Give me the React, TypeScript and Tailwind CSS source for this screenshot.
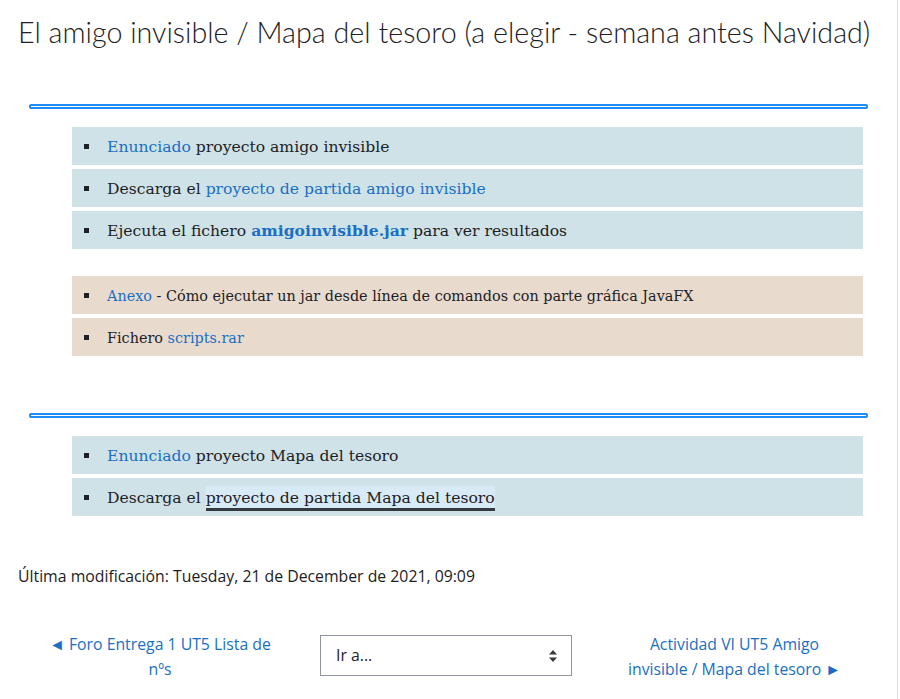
import React from "react";

const serif = { fontFamily: '"DejaVu Serif", Georgia, serif' };

function Hr() {
  return <div className="ml-[29px] mr-[29px] h-[5px] rounded-[2px] border-2 border-[#1e8cf5] bg-white" />;
}

function Item({ bg, size, children }: { bg: string; size?: string; children: React.ReactNode }) {
  return (
    <li className={`flex items-center h-[38px] ${bg}`}>
      <span className="ml-[12px] mr-[18px] w-[5px] h-[5px] bg-[#1d2125] shrink-0" />
      <span className={`${size ?? "text-[15.6px]"} pt-[3px] text-[#1d2125] whitespace-nowrap`}>{children}</span>
    </li>
  );
}

const A = ({ children }: { children: React.ReactNode }) => (
  <span className="text-[#1a6fc4]">{children}</span>
);

export default function App() {
  return (
    <div className="w-[900px] h-[699px] bg-white overflow-hidden" style={{ fontFamily: '"Open Sans", sans-serif' }}>
      <div className="w-[898px] h-[699px] border-r border-[#dee2e6]">
        <h1
          className="pt-[12px] pl-[18px] text-[28.7px] leading-[40px] font-light text-[#1d2125] whitespace-nowrap"
          style={{ fontFamily: 'Lato, sans-serif' }}
        >
          El amigo invisible / Mapa del tesoro (a elegir - semana antes Navidad)
        </h1>
        <div className="mt-[52px]">
          <Hr />
        </div>
        <ul className="mt-[18px] ml-[72px] mr-[34px] flex flex-col gap-[4px]" style={serif}>
          <Item bg="bg-[#cfe2e8]">
            <A>Enunciado</A> proyecto amigo invisible
          </Item>
          <Item bg="bg-[#cfe2e8]">
            Descarga el <A>proyecto de partida amigo invisible</A>
          </Item>
          <Item bg="bg-[#cfe2e8]">
            Ejecuta el fichero <span className="font-bold text-[#1a6fc4]">amigoinvisible.jar</span> para ver resultados
          </Item>
        </ul>
        <ul className="mt-[27px] ml-[72px] mr-[34px] flex flex-col gap-[4px]" style={serif}>
          <Item bg="bg-[#e8dbce]" size="text-[14.4px]">
            <A>Anexo</A> - Cómo ejecutar un jar desde línea de comandos con parte gráfica JavaFX
          </Item>
          <Item bg="bg-[#e8dbce]" size="text-[14.4px]">
            Fichero <A>scripts.rar</A>
          </Item>
        </ul>
        <div className="mt-[57px]">
          <Hr />
        </div>
        <ul className="mt-[18px] ml-[72px] mr-[34px] flex flex-col gap-[4px]" style={serif}>
          <Item bg="bg-[#cfe2e8]">
            <A>Enunciado</A> proyecto Mapa del tesoro
          </Item>
          <Item bg="bg-[#cfe2e8]">
            Descarga el{" "}
            <span className="bg-[#d9eaf7] border-b-[3px] border-[#343a40] pt-[3px] pb-[1px]">proyecto de partida Mapa del tesoro</span>
          </Item>
        </ul>
        <p className="mt-[49px] pl-[18px] text-[15.8px] leading-[22px] text-[#1d2125]">
          Última modificación: Tuesday, 21 de December de 2021, 09:09
        </p>
        <div className="mt-[45px] flex items-start">
          <div className="w-[320px] flex justify-center">
            <p className="w-[232px] text-center text-[15.8px] leading-[25px] text-[#1a6fc4]">
              ◄ Foro Entrega 1 UT5 Lista de nºs
            </p>
          </div>
          <div className="mt-[3px] w-[252px] h-[41px] border border-[#8f959e] flex items-center justify-between pl-[15px] pr-[13px] text-[15.8px] text-[#1d2125]">
            <span>Ir a...</span>
            <svg width="10" height="14" viewBox="0 0 10 14">
              <path d="M5 1 L9 5.5 H1 Z" fill="#343a40" />
              <path d="M5 13 L9 8.5 H1 Z" fill="#343a40" />
            </svg>
          </div>
          <div className="flex-1 flex justify-center">
            <p className="w-[232px] text-center text-[15.8px] leading-[25px] text-[#1a6fc4]">
              Actividad VI UT5 Amigo invisible / Mapa del tesoro ►
            </p>
          </div>
        </div>
      </div>
    </div>
  );
}
